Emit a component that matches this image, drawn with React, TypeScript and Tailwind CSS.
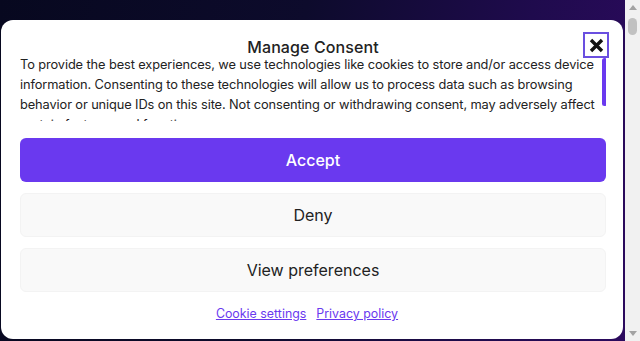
import React from 'react';

const purple = 'bg-[#6a39ef]';

// Stand-in for the window's classic scrollbar seen in the screenshot
function PageScrollbar() {
  return (
    <div className="w-[15px] h-full bg-[#f1f1f1] flex flex-col items-center">
      <div className="h-[15px] flex items-center justify-center">
        <svg width="8" height="5" viewBox="0 0 8 5"><path d="M0 5 L4 0 L8 5 Z" fill="#a3a3a3" /></svg>
      </div>
      <div className="mt-[3px] w-[9px] h-[17px] rounded-full bg-[#c1c1c1]" />
      <div className="flex-1" />
      <div className="h-[15px] flex items-center justify-center">
        <svg width="8" height="5" viewBox="0 0 8 5"><path d="M0 0 L8 0 L4 5 Z" fill="#a3a3a3" /></svg>
      </div>
    </div>
  );
}

export default function App() {
  return (
    <div className="h-[341px] flex overflow-hidden font-['Inter','Liberation_Sans',sans-serif]">
      <div className="flex-1 bg-[linear-gradient(100deg,#07081f_0%,#0d0b2c_45%,#1f0b4d_78%,#2c0a5e_100%)] pt-[20px] pl-[1px]">
        {/* Consent dialog */}
        <div className="w-[622px] h-[319px] bg-white rounded-[12px] pt-[12px] pl-[19px] pr-[17px] flex flex-col">
          <div className="relative h-[26px] flex items-center justify-center">
            <h2 className="text-[16px] font-medium text-[#222] mt-[3px] tracking-[0.1px]">Manage Consent</h2>
            <button className="absolute right-[-3px] top-0 w-[26px] h-[26px] border-2 border-[#6a4fe0] flex items-center justify-center">
              <svg width="15" height="15" viewBox="0 0 15 15">
                <path d="M2 2 L13 13 M13 2 L2 13" stroke="#111" strokeWidth="3.4" />
              </svg>
            </button>
          </div>

          {/* message with its own scrollbar */}
          <div className="relative mt-[-3px] h-[66px] overflow-hidden">
            <p className="text-[12.8px] leading-[20px] tracking-[-0.1px] text-[#222] w-[580px]">
              To provide the best experiences, we use technologies like cookies to store and/or access device information. Consenting to these technologies will allow us to process data such as browsing behavior or unique IDs on this site. Not consenting or withdrawing consent, may adversely affect certain features and functions.
            </p>
            <div className={`absolute right-[-1px] top-[3px] w-[5px] h-[48px] rounded-full ${purple}`} />
          </div>

          <div className="mt-[17px] flex flex-col gap-[11px] w-[586px]">
            <button className={`h-[44px] rounded-[6px] ${purple} text-white text-[16px] font-medium`}>Accept</button>
            <button className="h-[44px] rounded-[6px] bg-[#f9f9f9] border border-[#f3f3f3] text-[#222] text-[16px]">Deny</button>
            <button className="h-[44px] rounded-[6px] bg-[#f9f9f9] border border-[#f3f3f3] text-[#222] text-[16px]">View preferences</button>
          </div>

          <div className="mt-[13px] flex justify-center gap-[10px] pr-[12px] text-[12.4px] text-[#6a39ef] w-[586px]">
            <a className="underline" href="#">Cookie settings</a>
            <a className="underline" href="#">Privacy policy</a>
          </div>
        </div>
      </div>
      <PageScrollbar />
    </div>
  );
}
